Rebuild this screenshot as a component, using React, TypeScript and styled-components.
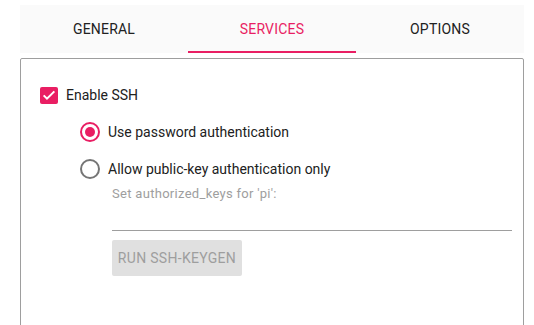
import React from "react";
import styled, { createGlobalStyle } from "styled-components";

const accent = "#e91e63";

const GlobalStyle = createGlobalStyle`
  html, body {
    margin: 0;
    padding: 0;
    background: #ffffff;
    overflow: hidden;
  }
  body {
    font-family: Roboto, "Liberation Sans", sans-serif;
    color: #212121;
  }
`;

const Page = styled.div`
  padding: 5px 10px 0 20px;
  display: flex;
  flex-direction: column;
  gap: 5px;
`;

const TabBar = styled.div`
  display: grid;
  grid-template-columns: repeat(3, 1fr);
  height: 48px;
  background: #fafafa;
`;

const Tab = styled.div<{ $active?: boolean }>`
  display: flex;
  align-items: center;
  justify-content: center;
  font-size: 14px;
  font-weight: 400;
  letter-spacing: 0.2px;
  color: ${(p) => (p.$active ? accent : "#212121")};
  border-bottom: 2px solid ${(p) => (p.$active ? accent : "transparent")};
  box-sizing: border-box;
  padding-top: 2px;
`;

const Panel = styled.div`
  border: 1px solid #9e9e9e;
  border-radius: 2px;
  min-height: 320px;
  padding: 24px 11px 0 19px;
  display: flex;
  flex-direction: column;
`;

const Row = styled.label`
  display: flex;
  align-items: center;
  gap: 8px;
  height: 24px;
  font-size: 14px;
  color: #212121;
`;

const CheckBox = styled.span`
  width: 18px;
  height: 17px;
  border-radius: 2px;
  background: ${accent};
  display: flex;
  align-items: center;
  justify-content: center;
`;

const RadioGroup = styled.div`
  margin-left: 40px;
  margin-top: 13px;
  display: flex;
  flex-direction: column;
  gap: 13px;
`;

const Radio = styled.span<{ $checked?: boolean }>`
  width: 20px;
  height: 20px;
  box-sizing: border-box;
  border-radius: 50%;
  border: 2px solid ${(p) => (p.$checked ? accent : "#757575")};
  display: flex;
  align-items: center;
  justify-content: center;
  &::after {
    content: "";
    width: 10px;
    height: 10px;
    border-radius: 50%;
    background: ${(p) => (p.$checked ? accent : "transparent")};
  }
`;

const KeySection = styled.div`
  margin-left: 72px;
  margin-top: 5px;
  display: flex;
  flex-direction: column;
`;

const Hint = styled.div`
  font-size: 13px;
  line-height: 16px;
  color: #9e9e9e;
  letter-spacing: 0.3px;
`;

const KeyInput = styled.div`
  height: 28px;
  border-bottom: 1px solid #9e9e9e;
`;

const KeygenButton = styled.button`
  align-self: flex-start;
  margin-top: 9px;
  height: 36px;
  width: 130px;
  padding: 0;
  border: none;
  border-radius: 2px;
  background: #e0e0e0;
  color: #9e9e9e;
  font-family: Roboto, "Liberation Sans", sans-serif;
  font-size: 14px;
  font-weight: 400;
  letter-spacing: 0.3px;
`;

const Check = () => (
  <svg width="16" height="16" viewBox="0 0 24 24">
    <path d="M4 12.5l5 5L20 6.5" fill="none" stroke="#fff" strokeWidth="3" />
  </svg>
);

export default function App() {
  return (
    <>
      <GlobalStyle />
      <Page>
        <TabBar>
          <Tab>GENERAL</Tab>
          <Tab $active>SERVICES</Tab>
          <Tab>OPTIONS</Tab>
        </TabBar>
        <Panel>
          <Row>
            <CheckBox>
              <Check />
            </CheckBox>
            Enable SSH
          </Row>
          <RadioGroup>
            <Row>
              <Radio $checked />
              Use password authentication
            </Row>
            <Row>
              <Radio />
              Allow public-key authentication only
            </Row>
          </RadioGroup>
          <KeySection>
            <Hint>Set authorized_keys for 'pi':</Hint>
            <KeyInput />
            <KeygenButton disabled>RUN SSH-KEYGEN</KeygenButton>
          </KeySection>
        </Panel>
      </Page>
    </>
  );
}
